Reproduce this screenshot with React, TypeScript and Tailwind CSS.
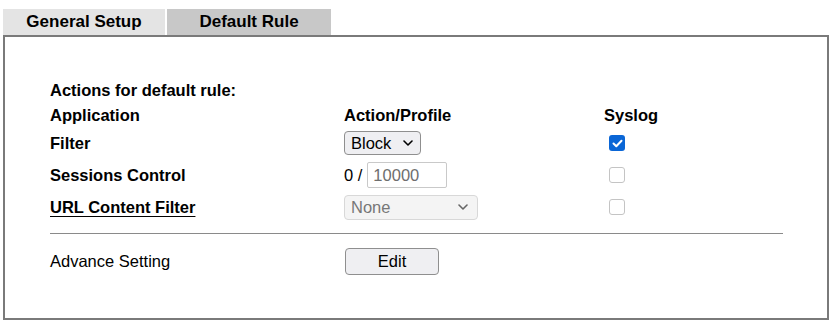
import React from "react";

function Chevron({ className = "" }: { className?: string }) {
  return (
    <svg width="10" height="6" viewBox="0 0 10 6" className={className}>
      <path d="M1 1l4 4 4-4" fill="none" stroke="currentColor" strokeWidth="1.6" strokeLinecap="round" strokeLinejoin="round" />
    </svg>
  );
}

function Check({ checked }: { checked?: boolean }) {
  if (checked) {
    return (
      <div className="w-[16px] h-[16px] rounded-[3px] bg-[#0a66d6] flex items-center justify-center">
        <svg width="11" height="9" viewBox="0 0 11 9">
          <path d="M1.5 4.5l2.8 2.8L9.5 1.8" fill="none" stroke="white" strokeWidth="2" strokeLinecap="round" strokeLinejoin="round" />
        </svg>
      </div>
    );
  }
  return <div className="w-[16px] h-[16px] rounded-[3px] border border-[#c4c4c4] bg-white" />;
}

export default function App() {
  return (
    <div className="w-[832px] h-[328px] bg-white text-black" style={{ fontFamily: '"Liberation Sans", Arial, sans-serif' }}>
      <div className="pt-[9px] pl-[3px] flex">
        <div className="w-[162px] h-[26px] bg-[#e4e4e4] flex items-center justify-center font-bold text-[17px]">General Setup</div>
        <div className="w-[2px]" />
        <div className="w-[164px] h-[26px] bg-[#c8c8c8] flex items-center justify-center font-bold text-[17px]">Default Rule</div>
      </div>
      <div className="ml-[3px] w-[826px] h-[285px] border-2 border-[#7a7a7a] pl-[45px] pt-[41px] text-[16.5px]">
        <div className="font-bold h-[26px] leading-[24px]">Actions for default rule:</div>
        <div className="grid grid-cols-[294px_260px_1fr] font-bold">
          <div className="h-[23px] leading-[22px]">Application</div>
          <div className="h-[23px] leading-[22px]">Action/Profile</div>
          <div className="h-[23px] leading-[22px]">Syslog</div>

          <div className="h-[32px] flex items-center">Filter</div>
          <div className="h-[32px] flex items-center font-normal">
            <div className="w-[77px] h-[24px] rounded-[4px] border border-[#8f8f8f] bg-[#efeff2] flex items-center justify-between pl-[6px] pr-[7px] text-[16.5px]">
              <span>Block</span>
              <Chevron />
            </div>
          </div>
          <div className="h-[32px] flex items-center pl-[5px]"><Check checked /></div>

          <div className="h-[32px] flex items-center">Sessions Control</div>
          <div className="h-[32px] flex items-center font-normal text-[16.5px]">
            <span>0 /</span>
            <div className="ml-[5px] w-[80px] h-[26px] rounded-[2px] border border-[#c9c9c9] flex items-center pl-[5px] text-[#6e6e6e]">10000</div>
          </div>
          <div className="h-[32px] flex items-center pl-[5px]"><Check /></div>

          <div className="h-[32px] flex items-center underline underline-offset-[3px]">URL Content Filter</div>
          <div className="h-[32px] flex items-center font-normal">
            <div className="w-[134px] h-[25px] rounded-[4px] border border-[#d8d8d8] bg-[#f4f4f4] flex items-center justify-between pl-[6px] pr-[9px] text-[16.5px] text-[#777]">
              <span>None</span>
              <Chevron className="text-[#666]" />
            </div>
          </div>
          <div className="h-[32px] flex items-center pl-[5px]"><Check /></div>
        </div>
        <div className="mt-[10px] w-[733px] h-px bg-[#8a8a8a]" />
        <div className="mt-[14px] flex items-center h-[27px]">
          <div className="w-[295px] text-[16.5px]">Advance Setting</div>
          <div className="w-[94px] h-[27px] rounded-[4px] border border-[#8f8f8f] bg-[#efeff2] flex items-center justify-center text-[16.5px]">Edit</div>
        </div>
      </div>
    </div>
  );
}
